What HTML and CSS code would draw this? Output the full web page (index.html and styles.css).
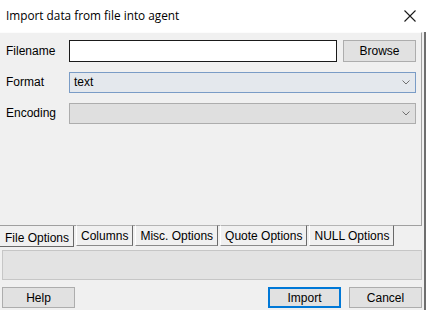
FILE: index.html
```html
<!DOCTYPE html>
<html lang="en">
<head>
    <meta charset="UTF-8">
    <title>Import data from file into agent</title>
    <link rel="stylesheet" href="styles.css">
</head>
<body>
    <div class="window">
        <div class="titlebar">
            <span class="title">Import data from file into agent</span>
            <svg class="close" width="12" height="12" viewBox="0 0 12 12">
                <path d="M0.5 0.5 L11.5 11.5 M11.5 0.5 L0.5 11.5" stroke="#1a1a1a" stroke-width="1.1" fill="none"/>
            </svg>
        </div>
        <div class="body">
            <div class="tabpane">
                <div class="content">
                    <div class="row">
                        <label>Filename</label>
                        <input type="text" class="field">
                        <button class="btn browse">Browse</button>
                    </div>
                    <div class="row">
                        <label>Format</label>
                        <div class="combo active">
                            <span>text</span>
                            <svg width="8" height="5" viewBox="0 0 8 5"><path d="M0.5 0.5 L4 4 L7.5 0.5" stroke="#707070" fill="none"/></svg>
                        </div>
                    </div>
                    <div class="row">
                        <label>Encoding</label>
                        <div class="combo disabled">
                            <span></span>
                            <svg width="8" height="5" viewBox="0 0 8 5"><path d="M0.5 0.5 L4 4 L7.5 0.5" stroke="#707070" fill="none"/></svg>
                        </div>
                    </div>
                </div>
                <div class="tabs">
                    <div class="tab selected">File Options</div>
                    <div class="tab">Columns</div>
                    <div class="tab">Misc. Options</div>
                    <div class="tab">Quote Options</div>
                    <div class="tab">NULL Options</div>
                </div>
            </div>
            <div class="status"></div>
            <div class="buttons">
                <button class="btn">Help</button>
                <div class="spacer"></div>
                <button class="btn default">Import</button>
                <button class="btn">Cancel</button>
            </div>
        </div>
    </div>
</body>
</html>
```

FILE: styles.css
```css
body {
    margin: 0;
    font-family: "Liberation Sans", Arial, sans-serif;
    font-size: 12px;
    color: #000;
    background: #f0f0f0;
}
.window {
    width: 426px;
    height: 310px;
    display: flex;
    flex-direction: column;
    overflow: hidden;
}
.titlebar {
    height: 32px;
    background: #fff;
    display: flex;
    align-items: center;
    padding: 0 10px 0 6px;
    box-sizing: border-box;
    flex-shrink: 0;
}
.title {
    flex: 1;
    font-family: "Open Sans", sans-serif;
    font-size: 11.8px;
    color: #000;
    padding-bottom: 2px;
}
.body {
    flex: 1;
    background: #f0f0f0;
    border-right: 2px solid #6e6e6e;
    padding-right: 2px;
    display: flex;
    flex-direction: column;
}
.tabpane {
    display: flex;
    flex-direction: column;
}
.content {
    height: 194px;
    border-top: 1px solid #fcfcfc;
    border-right: 1px solid #a0a0a0;
    border-bottom: 1px solid #a0a0a0;
    padding: 7px 4px 0 6px;
    box-sizing: border-box;
    display: flex;
    flex-direction: column;
    gap: 9px;
}
.row {
    display: flex;
    align-items: center;
    height: 22px;
}
.row label {
    width: 63px;
    flex-shrink: 0;
}
.field {
    width: 268px;
    height: 22px;
    box-sizing: border-box;
    border: 1px solid #1a1a1a;
    background: #fff;
    margin: 0 6px 0 0;
    padding: 0 3px;
    font: inherit;
}
.btn {
    width: 73px;
    height: 22px;
    box-sizing: border-box;
    background: #e1e1e1;
    border: 1px solid #adadad;
    font-family: "Liberation Sans", Arial, sans-serif;
    font-size: 12px;
    color: #000;
    padding: 0;
}
.combo {
    width: 347px;
    height: 21px;
    box-sizing: border-box;
    display: flex;
    align-items: center;
    justify-content: space-between;
    padding: 0 5px 0 4px;
}
.combo.active {
    background: #e4e8ed;
    border: 1px solid #7a9cc6;
}
.combo.disabled {
    background: #dfdfdf;
    border: 1px solid #adadad;
}
.tabs {
    display: flex;
    gap: 2px;
    height: 21px;
    align-items: flex-start;
}
.tab {
    height: 21px;
    box-sizing: border-box;
    padding: 2px 4px 0;
    line-height: 17px;
    border-top: 1px solid #b4b4b4;
    border-left: 1px solid #fff;
    border-right: 1px solid #696969;
    border-bottom: 1px solid #8a8a8a;
    margin-top: -1px;
    white-space: nowrap;
}
.tab.selected {
    border-top: none;
    border-left: none;
    margin-top: 0;
    padding: 5px 4px 0 5px;
    line-height: 15px;
    border-bottom: 1px solid #696969;
}
.status {
    height: 30px;
    margin: 3px 0 0 2px;
    background: #e3e3e3;
    border: 1px solid #c6c6c6;
    box-sizing: border-box;
}
.buttons {
    display: flex;
    gap: 8px;
    margin: 7px 0 0 2px;
}
.buttons .btn {
    height: 21px;
}
.spacer {
    flex: 1;
}
.btn.default {
    border: 2px solid #0078d7;
}
```
